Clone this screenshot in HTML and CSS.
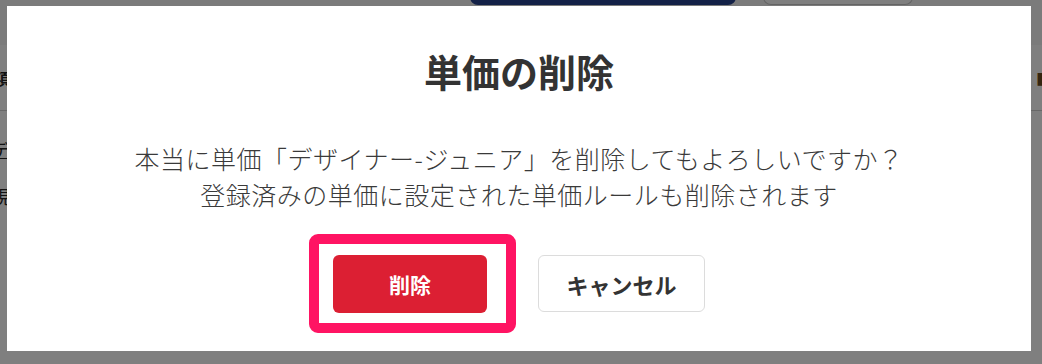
FILE: index.html
```html
<!DOCTYPE html>
<html lang="ja">
<head>
<meta charset="utf-8">
<title>単価の削除</title>
<link rel="stylesheet" href="styles.css">
</head>
<body>
<div class="page">
  <div class="toolbar">
    <div class="tb-primary"></div>
    <div class="tb-secondary"></div>
  </div>
  <div class="table">
    <div class="thead">
      <span class="th th-left">事項</span>
      <span class="th th-right">■</span>
    </div>
    <div class="tbody">
      <div class="trow"><span class="td link">デザイナー</span></div>
      <div class="trow"><span class="td">現場</span></div>
    </div>
  </div>
</div>

<div class="overlay">
  <div class="modal">
    <h2 class="modal-title">単価の削除</h2>
    <p class="modal-text">本当に単価「デザイナー-ジュニア」を削除してもよろしいですか？<br>登録済みの単価に設定された単価ルールも削除されます</p>
    <div class="modal-actions">
      <button class="btn btn-danger">削除<span class="highlight"></span></button>
      <button class="btn btn-cancel">キャンセル</button>
    </div>
  </div>
</div>
</body>
</html>
```

FILE: styles.css
```css
html, body {
  margin: 0;
  padding: 0;
  width: 1042px;
  height: 364px;
  overflow: hidden;
  font-family: "Noto Sans CJK JP", "Noto Sans", sans-serif;
  color: #333;
  background: #fff;
}

.page {
  margin-top: -35px;
}

.toolbar {
  height: 80px;
  background: #f6f6f6;
  display: flex;
  align-items: flex-start;
  padding-left: 470px;
  gap: 27px;
}

.tb-primary {
  width: 266px;
  height: 40px;
  background: #26438f;
  border-radius: 0 0 8px 8px;
}

.tb-secondary {
  width: 150px;
  height: 40px;
  box-sizing: border-box;
  border: 1px solid #c8c8c8;
  border-top: none;
  border-radius: 0 0 8px 8px;
  background: #fff;
}

.thead {
  height: 65px;
  border-bottom: 1px solid #d0d0d0;
  display: flex;
  align-items: center;
  justify-content: space-between;
  background: #fff;
}

.th {
  font-weight: bold;
  font-size: 16px;
  color: #222;
}

.th-left {
  margin-left: -22px;
}

.th-right {
  margin-right: -10px;
  color: #6a4a20;
}

.tbody {
  padding-top: 14px;
}

.trow {
  height: 47px;
  display: flex;
  align-items: center;
}

.td {
  font-size: 18px;
  color: #222;
  margin-left: -8px;
}

.link {
  text-decoration: underline;
}

.overlay {
  position: fixed;
  inset: 0;
  background: rgba(0, 0, 0, 0.5);
}

.modal {
  position: absolute;
  left: 7px;
  top: 6px;
  width: 1024px;
  height: 345px;
  background: #fff;
  box-sizing: border-box;
  padding-top: 38px;
  text-align: center;
}

.modal-title {
  margin: 0;
  font-size: 38px;
  line-height: 54px;
  font-weight: bold;
  color: #333;
}

.modal-text {
  margin: 42px 0 0;
  font-size: 25px;
  line-height: 36px;
  letter-spacing: 0.5px;
  font-weight: 300;
  color: #3a3a3a;
}

.modal-actions {
  margin-top: 43px;
  display: flex;
  justify-content: center;
  align-items: flex-start;
  gap: 51px;
}

.btn {
  position: relative;
  font-family: "Noto Sans CJK JP", "Noto Sans", sans-serif;
  font-weight: bold;
  border-radius: 6px;
  box-sizing: border-box;
  cursor: pointer;
  padding: 0;
}

.btn-danger {
  width: 154px;
  height: 58px;
  background: #dc1f33;
  color: #fff;
  border: none;
  font-size: 21px;
}

.btn-cancel {
  width: 167px;
  height: 57px;
  background: #fff;
  color: #333;
  border: 1px solid #dcdcdc;
  font-size: 22px;
}

.highlight {
  position: absolute;
  left: -24px;
  right: -29px;
  top: -21px;
  bottom: -20px;
  border: 10px solid #ff1463;
  border-radius: 9px;
  pointer-events: none;
}
```
